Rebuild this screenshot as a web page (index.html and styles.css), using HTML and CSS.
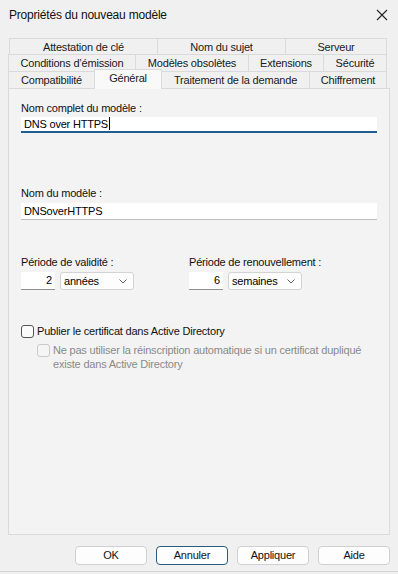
FILE: index.html
```html
<!DOCTYPE html>
<html lang="fr">
<head>
    <meta charset="UTF-8">
    <meta name="viewport" content="width=device-width, initial-scale=1.0">
    <title>Propriétés du nouveau modèle</title>
    <link rel="stylesheet" href="styles.css">
</head>
<body>

    <div class="dialog">
        <div class="titlebar">
            <span class="title">Propriétés du nouveau modèle</span>
            <svg class="close" width="12" height="12" viewBox="0 0 12 12">
                <path d="M1 1 L11 11 M11 1 L1 11" stroke="#222" stroke-width="1.1" fill="none"/>
            </svg>
        </div>

        <div class="tabs">
            <div class="tab-row row-1">
                <div class="tab w148">Attestation de clé</div>
                <div class="tab w128">Nom du sujet</div>
                <div class="tab w102">Serveur</div>
            </div>
            <div class="tab-row row-2">
                <div class="tab w127">Conditions d’émission</div>
                <div class="tab w113">Modèles obsolètes</div>
                <div class="tab w75">Extensions</div>
                <div class="tab w64">Sécurité</div>
            </div>
            <div class="tab-row row-3">
                <div class="tab w86">Compatibilité</div>
                <div class="tab w68 active">Général</div>
                <div class="tab w148">Traitement de la demande</div>
                <div class="tab w78">Chiffrement</div>
            </div>
        </div>

        <div class="panel">
            <div class="label first">Nom complet du modèle :</div>
            <div class="textbox focused">DNS over HTTPS<span class="caret"></span></div>

            <div class="label second">Nom du modèle :</div>
            <div class="textbox plain">DNSoverHTTPS</div>

            <div class="periods">
                <div class="period">
                    <div class="label">Période de validité :</div>
                    <div class="spin">
                        <div class="number">2</div>
                        <div class="combo">années
                            <svg class="chevron" width="8" height="5" viewBox="0 0 8 5"><path d="M0.5 0.5 L4 4 L7.5 0.5" stroke="#666" fill="none"/></svg>
                        </div>
                    </div>
                </div>
                <div class="period">
                    <div class="label">Période de renouvellement :</div>
                    <div class="spin">
                        <div class="number">6</div>
                        <div class="combo">semaines
                            <svg class="chevron" width="8" height="5" viewBox="0 0 8 5"><path d="M0.5 0.5 L4 4 L7.5 0.5" stroke="#666" fill="none"/></svg>
                        </div>
                    </div>
                </div>
            </div>

            <div class="check">
                <span class="box"></span>
                <span>Publier le certificat dans Active Directory</span>
            </div>
            <div class="check sub disabled">
                <span class="box"></span>
                <span>Ne pas utiliser la réinscription automatique si un certificat dupliqué<br>existe dans Active Directory</span>
            </div>
        </div>

        <div class="buttons">
            <div class="btn">OK</div>
            <div class="btn default">Annuler</div>
            <div class="btn">Appliquer</div>
            <div class="btn">Aide</div>
        </div>

        <div class="bottom-edge"></div>
    </div>

</body>
</html>
```

FILE: styles.css
```css
body {
    margin: 0;
    padding: 0;
    background: #f0f0f0;
    font-family: "Liberation Sans", Arial, sans-serif;
    font-size: 11px;
    letter-spacing: -0.2px;
    color: #1a1a1a;
}

.dialog {
    width: 398px;
    height: 574px;
    overflow: hidden;
}

.titlebar {
    height: 30px;
    padding: 0 10px 0 9px;
    display: flex;
    align-items: center;
    justify-content: space-between;
}

.title {
    font-size: 12px;
    color: #111;
}

.close {
    margin-top: -1px;
}

/* tab strip */
.tabs {
    margin-top: 8px;
}

.tab-row {
    display: flex;
    height: 17px;
}

.row-1 {
    margin-left: 9px;
    height: 16px;
}

.row-2,
.row-3 {
    margin-left: 8px;
}

.tab {
    box-sizing: border-box;
    border: 1px solid #dadada;
    border-bottom: none;
    border-right: none;
    text-align: center;
    line-height: 16px;
    background: #f0f0f0;
    white-space: nowrap;
}

.tab:last-child {
    border-right: 1px solid #dadada;
}

.tab.active {
    position: relative;
    top: -2px;
    height: 20px;
    background: #f9f9f9;
    border-right: 1px solid #dadada;
    margin-right: -1px;
    z-index: 1;
}

.w64 { width: 64px; }
.w68 { width: 68px; }
.w75 { width: 75px; }
.w78 { width: 78px; }
.w86 { width: 86px; }
.w102 { width: 102px; }
.w113 { width: 113px; }
.w127 { width: 127px; }
.w128 { width: 128px; }
.w148 { width: 148px; }

/* page */
.panel {
    box-sizing: border-box;
    width: 382px;
    height: 447px;
    margin-left: 8px;
    padding: 0 12px;
    border: 1px solid #dadada;
    background: #f3f3f3;
}

.label {
    line-height: 16px;
    color: #111;
}

.label.first {
    margin-top: 11px;
}

.label.second {
    margin-top: 52px;
}

.textbox {
    box-sizing: border-box;
    background: #fff;
    padding-left: 3px;
    color: #000;
}

.textbox.focused {
    margin-top: 1px;
    height: 16px;
    line-height: 14px;
    border-bottom: 2px solid #1d5f92;
}

.textbox.plain {
    margin-top: 2px;
    height: 17px;
    line-height: 16px;
    border-bottom: 1px solid #bdbdbd;
}

.caret {
    display: inline-block;
    width: 1px;
    height: 13px;
    margin-left: 1px;
    background: #000;
    vertical-align: -2px;
}

.periods {
    margin-top: 34px;
    display: grid;
    grid-template-columns: 168px auto;
}

.spin {
    margin-top: 2px;
    display: flex;
    gap: 5px;
    height: 18px;
}

.number {
    box-sizing: border-box;
    width: 34px;
    background: #fff;
    border-bottom: 1px solid #8f8f8f;
    text-align: right;
    padding-right: 3px;
    line-height: 17px;
    color: #000;
}

.combo {
    box-sizing: border-box;
    width: 74px;
    background: #fdfdfd;
    border: 1px solid #d3d3d3;
    border-radius: 3px;
    padding-left: 3px;
    line-height: 16px;
    color: #000;
    display: flex;
    align-items: center;
    justify-content: space-between;
    padding-right: 6px;
}

.check {
    display: flex;
    align-items: flex-start;
    gap: 3px;
    line-height: 16px;
    color: #111;
}

.check .box {
    flex: none;
    box-sizing: border-box;
    width: 13px;
    height: 13px;
    margin-top: 2px;
    border: 1px solid #555;
    border-radius: 3px;
    background: #fbfbfb;
}

.check:not(.sub) {
    margin-top: 33px;
}

.check.sub {
    margin-top: 4px;
    margin-left: 16px;
    line-height: 14px;
}

.check.sub .box {
    margin-top: 1px;
}

.check.disabled {
    color: #8a8a8a;
}

.check.disabled .box {
    border-color: #c9c9c9;
    background: #f5f5f5;
}

/* dialog buttons */
.buttons {
    margin-top: 11px;
    display: flex;
    justify-content: flex-end;
    gap: 9px;
    padding-right: 8px;
}

.btn {
    box-sizing: border-box;
    width: 72px;
    height: 19px;
    border: 1px solid #d0d0d0;
    border-radius: 4px;
    background: #fdfdfd;
    text-align: center;
    line-height: 17px;
    color: #111;
}

.btn.default {
    border-color: #2b5d78;
}

.bottom-edge {
    margin-top: 6px;
    height: 1px;
    background: #d4d4d4;
}
```
